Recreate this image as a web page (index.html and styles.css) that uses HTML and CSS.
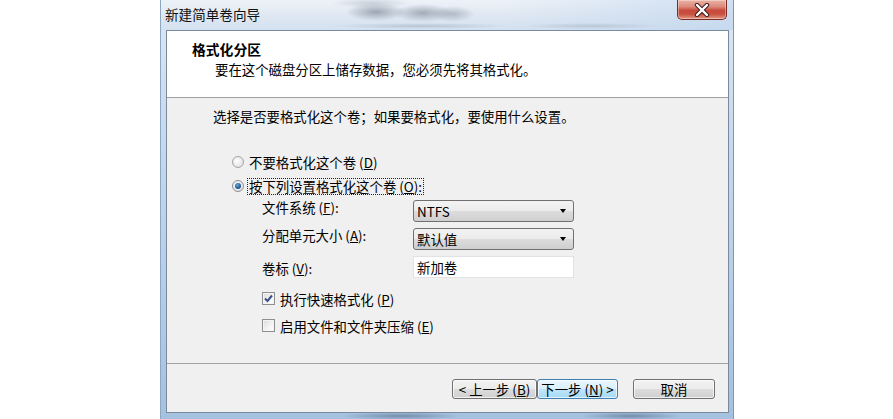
FILE: index.html
```html
<!DOCTYPE html>
<html lang="zh-CN">
<head>
<meta charset="utf-8">
<title>新建简单卷向导</title>
<link rel="stylesheet" href="styles.css">
</head>
<body>
<div class="page">
  <div class="dialog">
    <div class="titlebar">
      <span class="title">新建简单卷向导</span>
      <span class="close">
        <svg width="18" height="14" viewBox="0 0 18 14">
          <path d="M4 2 L14 12 M14 2 L4 12" stroke="#3a2020" stroke-width="4.4" stroke-linecap="round" fill="none"/>
          <path d="M4 2 L14 12 M14 2 L4 12" stroke="#ffffff" stroke-width="2.4" stroke-linecap="round" fill="none"/>
        </svg>
      </span>
    </div>
    <div class="client">
      <div class="header">
        <div class="h-title">格式化分区</div>
        <div class="h-sub">要在这个磁盘分区上储存数据，您必须先将其格式化。</div>
      </div>
      <div class="body">
        <div class="intro">选择是否要格式化这个卷；如果要格式化，要使用什么设置。</div>
        <div class="radios">
          <div class="radio-row"><span class="radio"></span><span class="rlabel">不要格式化这个卷 (<u>D</u>)</span></div>
          <div class="radio-row"><span class="radio on"></span><span class="rlabel focus">按下列设置格式化这个卷 (<u>O</u>):</span></div>
        </div>
        <div class="form">
          <span class="flabel up">文件系统 (<u>F</u>):</span>
          <div class="combo"><span>NTFS</span><span class="arrow"></span></div>
          <span class="flabel up">分配单元大小 (<u>A</u>):</span>
          <div class="combo"><span>默认值</span><span class="arrow"></span></div>
          <span class="flabel down">卷标 (<u>V</u>):</span>
          <div class="edit">新加卷</div>
        </div>
        <div class="checks">
          <div class="check-row"><span class="check on">
            <svg width="11" height="11" viewBox="0 0 11 11"><path d="M2 5.5 L4.5 8 L9 2.5" stroke="#3b4f8a" stroke-width="2" fill="none"/></svg>
          </span><span>执行快速格式化 (<u>P</u>)</span></div>
          <div class="check-row"><span class="check"></span><span>启用文件和文件夹压缩 (<u>E</u>)</span></div>
        </div>
      </div>
      <div class="footer">
        <button class="btn back">&lt; 上一步 (<u>B</u>)</button>
        <button class="btn next">下一步 (<u>N</u>) &gt;</button>
        <button class="btn cancel">取消</button>
      </div>
    </div>
  </div>
</div>
</body>
</html>
```
FILE: styles.css
```css
* { box-sizing: border-box; }
html, body { margin: 0; padding: 0; }
body {
  background: #ffffff;
  font-family: "Noto Sans CJK SC", "Noto Sans", sans-serif;
  font-size: 13.4px;
  color: #000;
  overflow: hidden;
}
u { text-decoration: underline; text-underline-offset: 1px; }

.page { padding-left: 160px; height: 419px; }

.dialog {
  width: 574px;
  height: 419px;
  display: flex;
  flex-direction: column;
  padding: 0 4px 6px 5px;
  border-left: 1px solid #8ea7c2;
  border-right: 1px solid #7f97b3;
  background:
    radial-gradient(ellipse 60px 4px at 240px 416px, rgba(80,100,130,0.55), transparent),
    radial-gradient(ellipse 50px 4px at 470px 416px, rgba(70,90,120,0.5), transparent),
    linear-gradient(180deg, #dfe8f2 0, #cbdcee 25%, #b9d0e8 60%, #a4c1df 100%);
}

.titlebar {
  height: 30px;
  margin: 0 -4px 0 -5px;
  padding: 0 6px 0 4px;
  display: flex;
  justify-content: space-between;
  align-items: flex-start;
  background:
    radial-gradient(ellipse 30px 9px at 215px 12px, rgba(110,120,135,0.6), transparent),
    radial-gradient(ellipse 30px 9px at 262px 13px, rgba(110,120,135,0.55), transparent),
    radial-gradient(ellipse 22px 8px at 292px 14px, rgba(120,130,145,0.45), transparent),
    radial-gradient(ellipse 40px 5px at 210px 3px, rgba(140,150,165,0.35), transparent),
    radial-gradient(ellipse 90px 3px at 260px 26px, rgba(150,160,175,0.45), transparent),
    radial-gradient(ellipse 70px 3px at 430px 26px, rgba(150,160,175,0.4), transparent),
    linear-gradient(90deg, rgba(255,255,255,0) 60%, rgba(190,212,238,0.6) 100%),
    linear-gradient(180deg, #edf2f8 0, #e2eaf3 40%, #d3e1ef 100%);
}
.title {
  font-size: 13.6px;
  line-height: 17px;
  margin-top: 6px;
  color: #111;
}
.close {
  width: 50px;
  height: 20px;
  display: flex;
  align-items: center;
  justify-content: center;
  border: 1px solid #7d2b25;
  border-top: none;
  border-radius: 0 0 5px 5px;
  background: linear-gradient(180deg, #eab3a6 0, #dc8a7b 35%, #c74a3c 55%, #c9503f 75%, #e39a88 100%);
  box-shadow: inset 0 0 0 1px rgba(255,255,255,0.35);
}

.client {
  flex: 1;
  display: flex;
  flex-direction: column;
  border: 1px solid #7a8a9e;
  background: #f0f0f0;
}

.header {
  height: 67px;
  flex: none;
  background: #ffffff;
  border-bottom: 1px solid #a0a0a0;
  padding: 8px 0 0 25px;
}
.h-title {
  font-weight: 700;
  font-size: 13.8px;
  line-height: 20px;
}
.h-sub {
  line-height: 20px;
  margin-left: 23px;
}

.body {
  flex: 1;
  padding: 10px 0 0 46px;
}
.intro { line-height: 17px; }

.radios { margin-top: 25px; }
.radio-row {
  height: 24px;
  display: flex;
  align-items: center;
  margin-left: 19px;
  gap: 3px;
}
.radio {
  width: 12px;
  height: 12px;
  border-radius: 50%;
  border: 1px solid #a5a5a5;
  background: radial-gradient(circle at 40% 40%, #ffffff 0, #e8e8e8 60%, #d6d6d6 100%);
  display: flex;
  align-items: center;
  justify-content: center;
}
.radio.on { border-color: #8c8f94; }
.radio.on::after {
  content: "";
  width: 6px;
  height: 6px;
  border-radius: 50%;
  background: radial-gradient(circle at 40% 35%, #6aa6d6 0, #24609a 55%, #173f6b 100%);
}
.rlabel {
  border: 1px dotted transparent;
  padding: 0 1px;
  line-height: 15px;
}
.rlabel.focus { border-color: #222; }

.form {
  margin: 2px 0 0 49px;
  display: grid;
  grid-template-columns: 151px 161px;
  grid-auto-rows: 22px;
  row-gap: 6px;
}
.flabel { line-height: 17px; align-self: center; }
.flabel.up { margin-top: -8px; }
.flabel.down { margin-top: 3px; }

.combo {
  border: 1px solid #707070;
  border-radius: 3px;
  background: linear-gradient(180deg, #f3f3f3 0, #ebebeb 50%, #dddddd 50%, #cfcfcf 100%);
  display: flex;
  align-items: center;
  justify-content: space-between;
  padding: 0 7px 0 3px;
  line-height: 17px;
}
.arrow {
  width: 0;
  height: 0;
  border-left: 3.5px solid transparent;
  border-right: 3.5px solid transparent;
  border-top: 4px solid #000;
}
.edit {
  background: #ffffff;
  border: 1px solid #e1e2e6;
  padding: 0 3px;
  line-height: 20px;
}

.checks { margin: 7px 0 0 49px; }
.check-row {
  height: 27px;
  display: flex;
  align-items: center;
  gap: 5px;
}
.check {
  width: 13px;
  height: 13px;
  border: 1px solid #8e8f8f;
  background: linear-gradient(135deg, #dcdcdc 0, #f4f4f4 60%, #ffffff 100%);
  box-shadow: inset 0 0 0 1px #f4f4f4;
  display: flex;
  align-items: center;
  justify-content: center;
}

.footer {
  height: 49px;
  flex: none;
  border-top: 1px solid #a0a0a0;
  display: flex;
  justify-content: flex-end;
  align-items: flex-start;
  padding: 15px 13px 0 0;
}
.btn {
  height: 20px;
  font-family: inherit;
  font-size: 13.4px;
  line-height: 17px;
  color: #000;
  padding: 0;
  border: 1px solid #707070;
  border-radius: 3px;
  background: linear-gradient(180deg, #f2f2f2 0, #ebebeb 50%, #dddddd 50%, #cfcfcf 100%);
  box-shadow: inset 0 0 0 1px rgba(255,255,255,0.7);
}
.btn.back { width: 85px; }
.btn.next {
  width: 81px;
  border-color: #3c7fb1;
  background: linear-gradient(180deg, #eaf6fd 0, #d9f0fc 50%, #bee6fd 50%, #a7d9f5 100%);
}
.btn.cancel { width: 82px; margin-left: 15px; }
```
